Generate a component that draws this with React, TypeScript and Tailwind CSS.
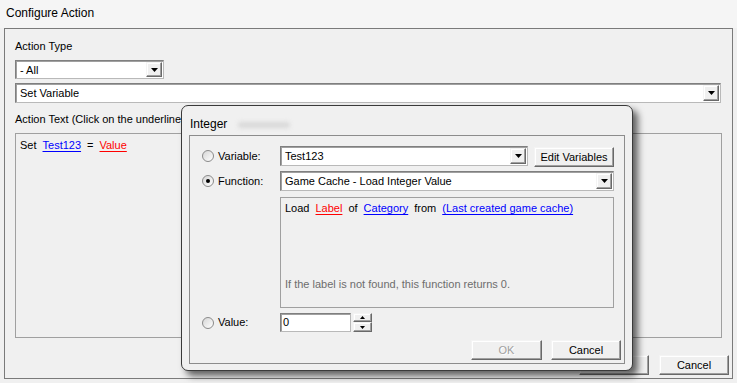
import type { ReactNode } from 'react';

const sunken =
  'border border-t-[#7f7f7f] border-l-[#7f7f7f] border-r-[#b9b9b9] border-b-[#b9b9b9] shadow-[inset_1px_1px_0_#a0a0a0] bg-white';
const raised =
  'border border-t-[#f4f4f4] border-l-[#f4f4f4] border-r-[#696969] border-b-[#696969] shadow-[inset_-1px_-1px_0_#a0a0a0,inset_1px_1px_0_#ffffff] bg-[#f0f0f0]';

const Arrow = () => (
  <div className={`${raised} w-[16px] h-full flex items-center justify-center`}>
    <svg width="7" height="4" viewBox="0 0 7 4">
      <path d="M0 0h7L3.5 4z" fill="#000" />
    </svg>
  </div>
);

const Combo = ({ text, className }: { text: string; className: string }) => (
  <div className={`${sunken} ${className} flex items-stretch p-[1px]`}>
    <span className="flex-1 pl-[3px] leading-[16px] truncate">{text}</span>
    <Arrow />
  </div>
);

const Button = ({ children, className, disabled }: { children: ReactNode; className: string; disabled?: boolean }) => (
  <div
    className={`${raised} ${className} flex items-center justify-center ${
      disabled ? 'text-[#a0a0a0] [text-shadow:1px_1px_0_#ffffff]' : ''
    }`}
  >
    {children}
  </div>
);

const Radio = ({ checked }: { checked?: boolean }) => (
  <div className="w-[12px] h-[12px] rounded-full border border-[#8a8a8a] bg-gradient-to-br from-[#d6d6d6] to-white flex items-center justify-center">
    {checked && <div className="w-[4px] h-[4px] rounded-full bg-black" />}
  </div>
);

const Link = ({ children, red }: { children: ReactNode; red?: boolean }) => (
  <span className={`underline underline-offset-2 ${red ? 'text-[#ff0000]' : 'text-[#0000ff]'}`}>{children}</span>
);

const IntegerDialog = () => (
  <div className="absolute left-[181px] top-[105px] w-[452px] h-[266px] rounded-[7px] border border-[#3a3a3a] bg-[#f0f0f0] shadow-[5px_5px_7px_rgba(0,0,0,0.6)]">
    <div className="h-[29px] pl-[8px] pt-[7px] text-[12px] leading-[15px] flex items-center gap-[11px]">
      <span>Integer</span>
      <div className="w-[52px] h-[6px] mt-[2px] rounded-full bg-[#d8d8d8] blur-[2px]" />
    </div>
    <div className="ml-[7px] w-[436px] h-[229px] border border-[#8c8c8c] pt-[10px] pr-[3px]">
      <div className="flex items-center h-[20px]">
        <div className="w-[90px] flex items-center pl-[12px] gap-[4px]">
          <Radio />
          <span>Variable:</span>
        </div>
        <Combo text="Test123" className="w-[248px] h-[20px]" />
        <Button className="ml-[6px] w-[80px] h-[20px] mt-[2px]">Edit Variables</Button>
      </div>
      <div className="flex items-center h-[20px] mt-[5px]">
        <div className="w-[90px] flex items-center pl-[12px] gap-[4px]">
          <Radio checked />
          <span>Function:</span>
        </div>
        <Combo text="Game Cache - Load Integer Value" className="w-[334px] h-[20px]" />
      </div>
      <div className="ml-[90px] mt-[6px] w-[334px] h-[111px] border border-[#a0a0a0] pl-[4px] pt-[4px] pb-[16px] flex flex-col justify-between">
        <div className="flex gap-[6px]">
          <span>Load</span>
          <Link red>Label</Link>
          <span>of</span>
          <Link>Category</Link>
          <span>from</span>
          <Link>(Last created game cache)</Link>
        </div>
        <div className="text-[#6d6d6d]">If the label is not found, this function returns 0.</div>
      </div>
      <div className="flex items-center h-[19px] mt-[5px]">
        <div className="w-[90px] flex items-center pl-[12px] gap-[4px]">
          <Radio />
          <span>Value:</span>
        </div>
        <div className={`${sunken} w-[71px] h-[19px] pl-[2px] leading-[16px]`}>0</div>
        <div className="ml-[2px] w-[19px] h-[19px] flex flex-col">
          <div className={`${raised} h-[9px] flex items-center justify-center`}>
            <svg width="5" height="3" viewBox="0 0 5 3">
              <path d="M2.5 0L5 3H0z" fill="#000" />
            </svg>
          </div>
          <div className={`${raised} h-[10px] flex items-center justify-center`}>
            <svg width="5" height="3" viewBox="0 0 5 3">
              <path d="M0 0h5L2.5 3z" fill="#000" />
            </svg>
          </div>
        </div>
      </div>
      <div className="flex justify-end gap-[9px] mt-[8px]">
        <Button disabled className="w-[71px] h-[20px]">OK</Button>
        <Button className="w-[70px] h-[20px]">Cancel</Button>
      </div>
    </div>
  </div>
);

export default function App() {
  return (
    <div className="relative w-[737px] h-[383px] overflow-hidden bg-[#f0f0f0] font-['Liberation_Sans',Arial,sans-serif] text-[11px] leading-[13px] text-black">
      <div className="h-[28px] pl-[6px] pt-[6px] text-[12px] leading-[15px] bg-[#f5f5f5]">Configure Action</div>
      <div className="ml-[4px] w-[729px] h-[351px] border border-[#7a7a7a] pl-[10px] flex flex-col">
        <div className="mt-[11px]">Action Type</div>
        <Combo text="- All" className="mt-[7px] w-[149px] h-[19px]" />
        <Combo text="Set Variable" className="mt-[4px] w-[706px] h-[20px]" />
        {/* only the part left of the Integer dialog is visible */}
        <div className="mt-[10px] whitespace-nowrap">Action Text (Click on the underlined</div>
        <div className="mt-[7px] w-[707px] h-[205px] border border-[#a0a0a0] pl-[4px] pt-[5px] flex gap-[6px]">
          <span>Set</span>
          <Link>Test123</Link>
          <span>=</span>
          <Link red>Value</Link>
        </div>
        <div className="mt-[17px] flex justify-end gap-[10px] pr-[3px]">
          <Button className="w-[70px] h-[20px]">OK</Button>
          <Button className="w-[70px] h-[20px]">Cancel</Button>
        </div>
      </div>
      <IntegerDialog />
    </div>
  );
}
